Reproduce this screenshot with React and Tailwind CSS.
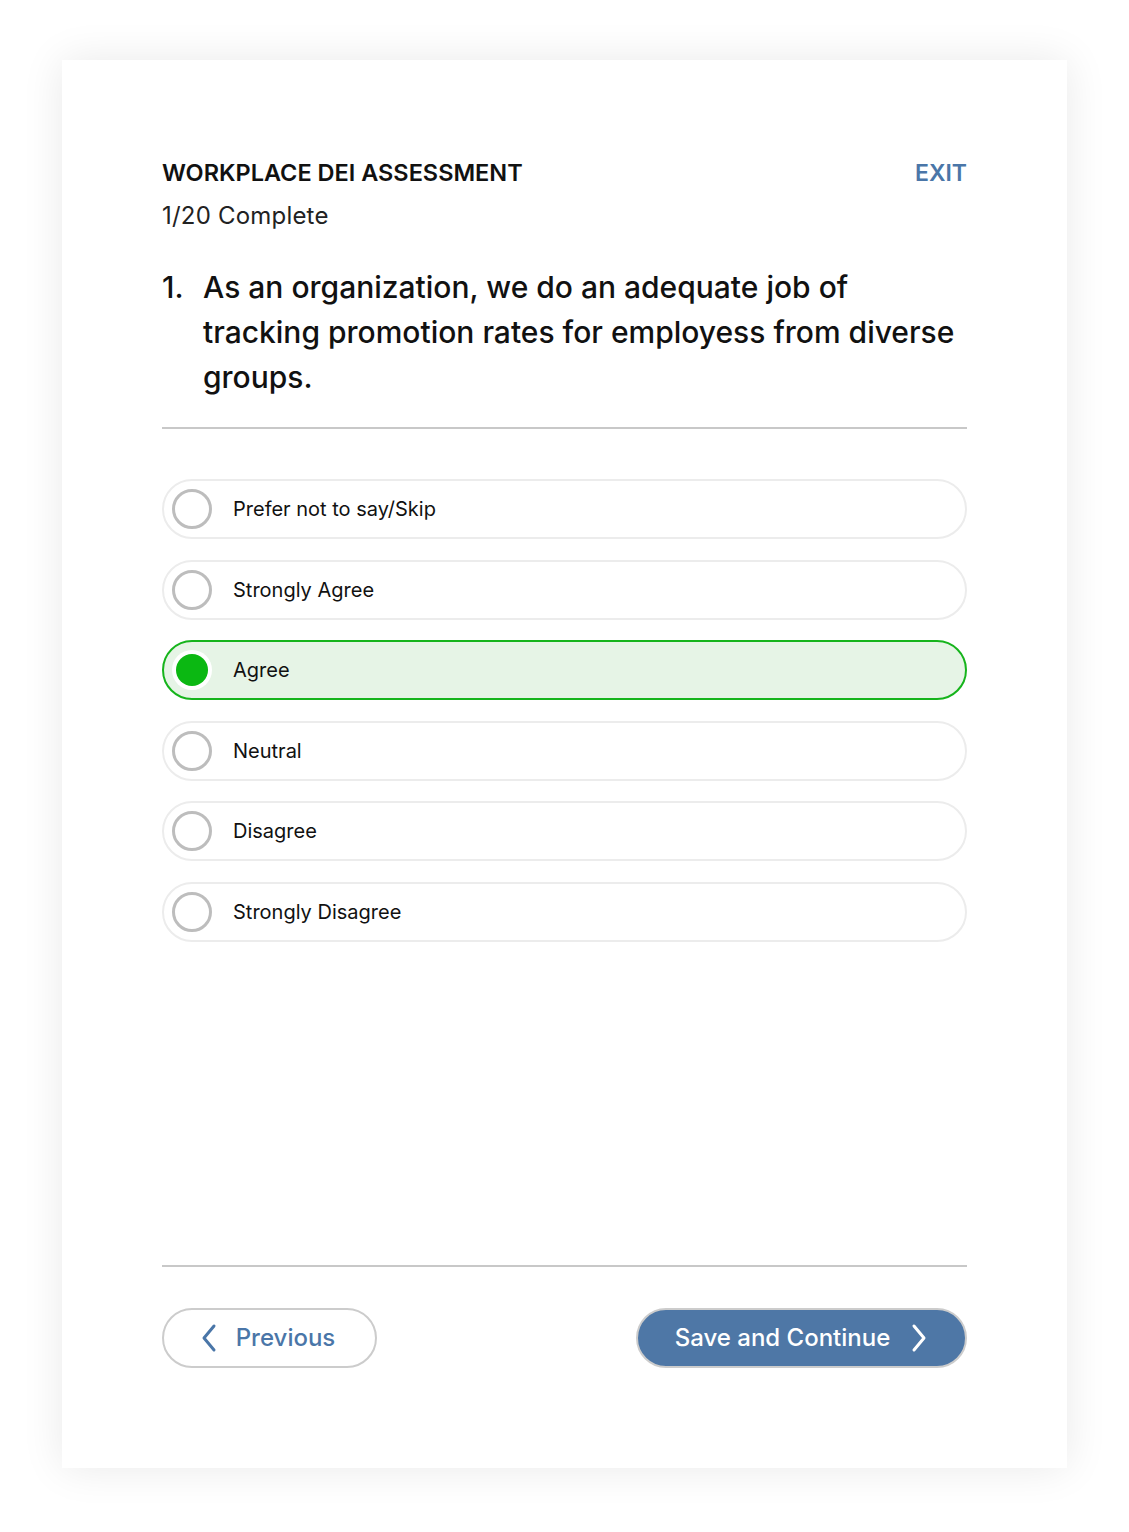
import React, { useState } from 'react'

const options = [
  'Prefer not to say/Skip',
  'Strongly Agree',
  'Agree',
  'Neutral',
  'Disagree',
  'Strongly Disagree',
]

function Radio({ checked }) {
  if (checked) {
    return (
      <span className="flex h-[40px] w-[40px] items-center justify-center rounded-full bg-white">
        <span className="h-[32px] w-[32px] rounded-full bg-[#0bb812]" />
      </span>
    )
  }
  return <span className="h-[40px] w-[40px] rounded-full border-[3px] border-[#bdbdbd] bg-white" />
}

export default function App() {
  const [selected, setSelected] = useState(2)

  return (
    <div className="min-h-[1532px] bg-white px-[62px] pt-[60px] pb-[64px]" style={{ fontFamily: 'Inter, "Noto Sans", sans-serif' }}>
      <div className="flex h-[1408px] flex-col bg-white px-[100px] pt-[99px] pb-[100px] shadow-[0_0_40px_rgba(0,0,0,0.09)]">
        <div className="flex items-start justify-between">
          <div>
            <h1 className="text-[23.5px] font-semibold leading-[28px] text-[#111]">WORKPLACE DEI ASSESSMENT</h1>
            <p className="mt-[15px] text-[24px] leading-[28px] tracking-[0.2px] text-[#222]">1/20 Complete</p>
          </div>
          <button className="text-[23px] font-semibold leading-[28px] text-[#4a76a8]">EXIT</button>
        </div>

        <div className="mt-[35px] flex border-b-2 border-[#c8c8c8] pb-[27px]">
          <span className="w-[41px] shrink-0 text-[30px] font-medium leading-[45px] text-[#111]">1.</span>
          <p className="w-[764px] text-[30px] font-medium leading-[45px] text-[#111]">
            As an organization, we do an adequate job of tracking promotion rates for employess from diverse groups.
          </p>
        </div>

        <div className="mt-[50px] flex flex-col gap-[20.6px]">
          {options.map((label, i) => {
            const checked = i === selected
            return (
              <button
                key={label}
                onClick={() => setSelected(i)}
                className={
                  checked
                    ? 'flex h-[60px] items-center gap-[21px] rounded-full border-2 border-[#16b41c] bg-[#e6f4e6] pl-[8px] text-left'
                    : 'flex h-[60px] items-center gap-[21px] rounded-full border-2 border-[#ececec] bg-white pl-[8px] text-left'
                }
              >
                <Radio checked={checked} />
                <span className="text-[20px] text-[#111]">{label}</span>
              </button>
            )
          })}
        </div>

        <div className="mt-auto border-t-2 border-[#c8c8c8] pt-[41px]">
          <div className="flex items-center justify-between">
            <button className="flex h-[60px] w-[215px] items-center justify-center gap-[18px] rounded-full border-2 border-[#cccccc] bg-white pr-[4px] text-[24px] font-medium text-[#4a76a8]">
              <svg width="18" height="30" viewBox="0 0 18 30" fill="none" stroke="#4a76a8" strokeWidth="3" strokeLinecap="round" strokeLinejoin="round">
                <path d="M14 3 L4 15 L14 27" />
              </svg>
              Previous
            </button>
            <button className="flex h-[60px] w-[331px] items-center justify-center gap-[20px] rounded-full border-2 border-[#cccccc] bg-[#4e77a6] text-[24px] font-medium text-white">
              Save and Continue
              <svg width="18" height="30" viewBox="0 0 18 30" fill="none" stroke="#ffffff" strokeWidth="3" strokeLinecap="round" strokeLinejoin="round">
                <path d="M4 3 L14 15 L4 27" />
              </svg>
            </button>
          </div>
        </div>
      </div>
    </div>
  )
}
